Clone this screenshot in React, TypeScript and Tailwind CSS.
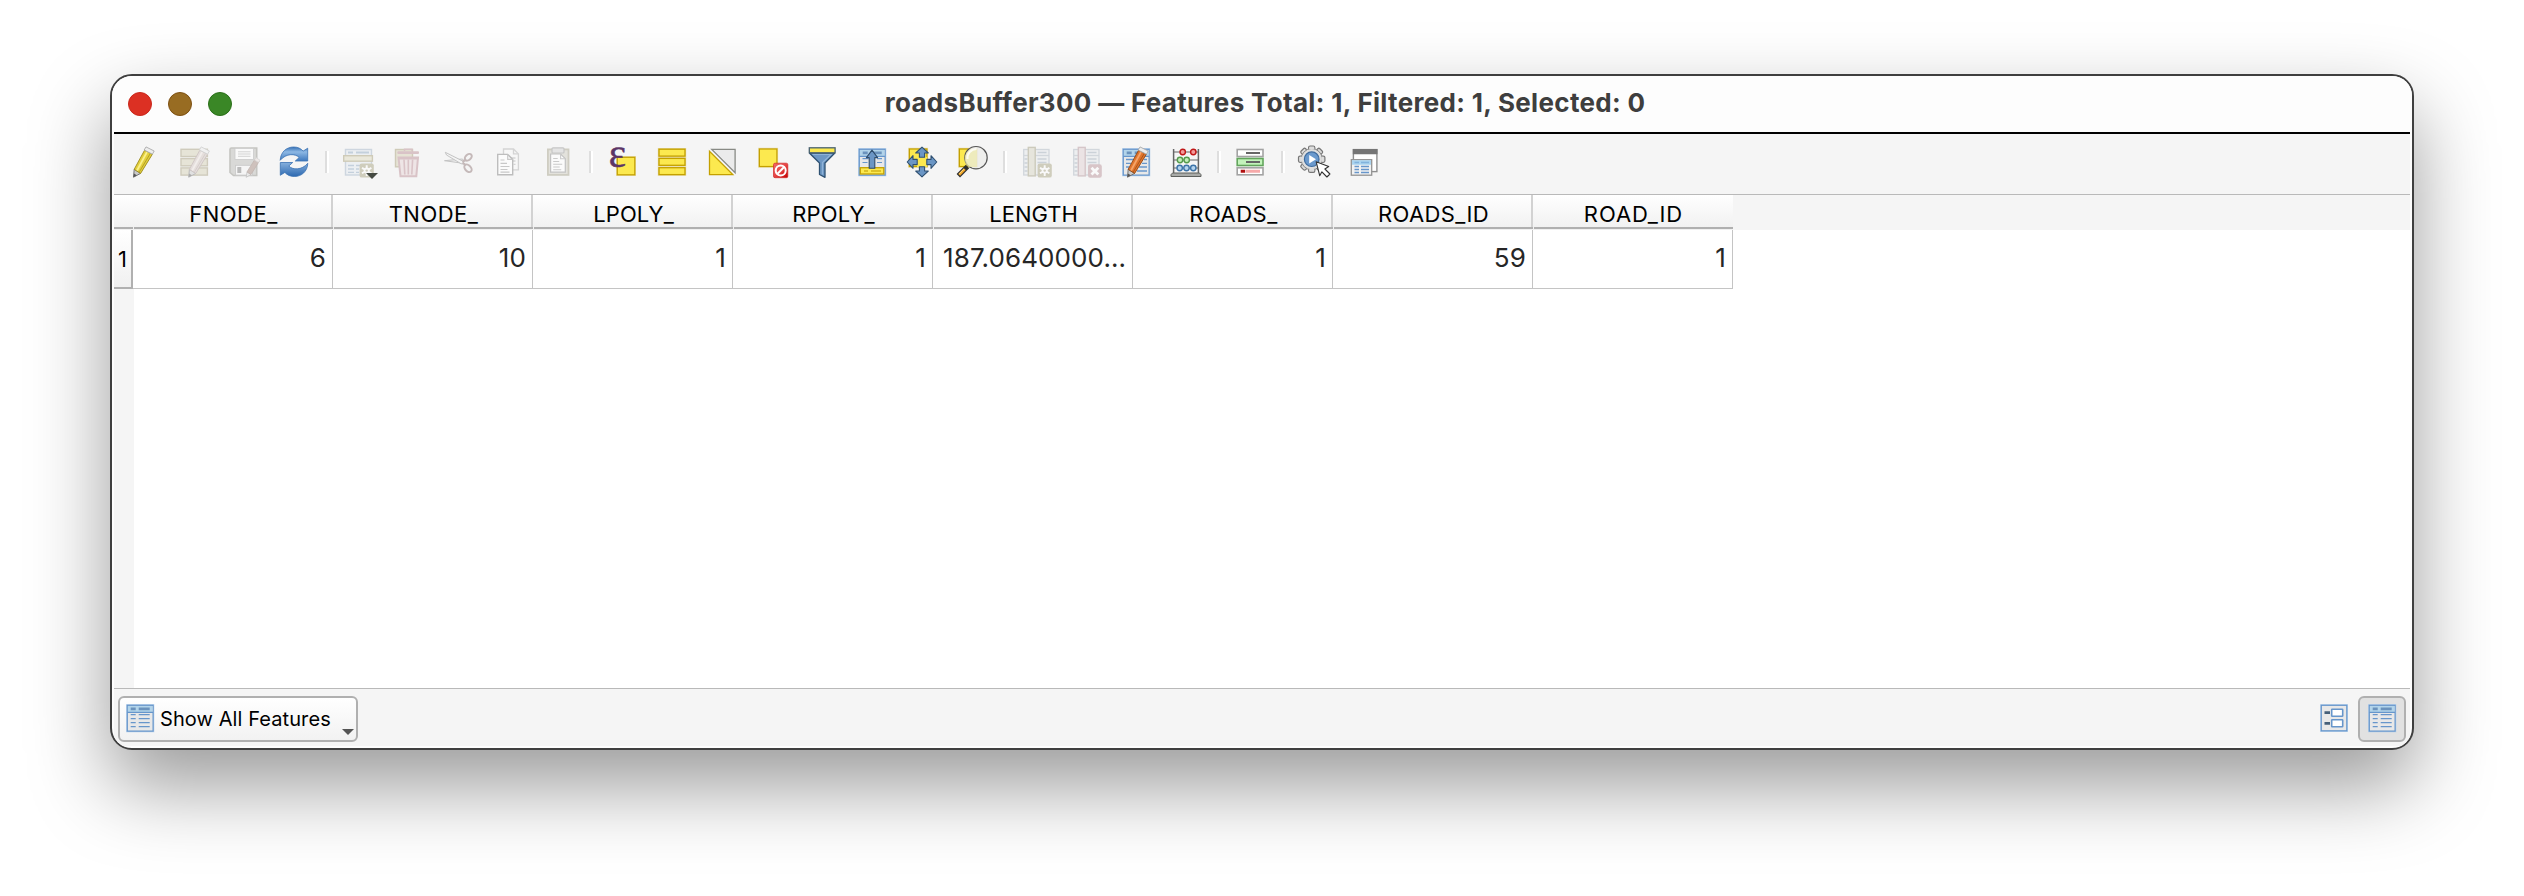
import React from 'react';
import type { ReactNode } from 'react';

function Icon({ children, faded = false }: { children: ReactNode; faded?: boolean }) {
  return (
    <svg
      viewBox="0 0 32 32"
      aria-hidden="true"
      className={faded ? 'size-8 shrink-0 overflow-visible opacity-45' : 'size-8 shrink-0 overflow-visible'}
    >
      {children}
    </svg>
  );
}

function Divider() {
  return <div className="-mr-[5px] -ml-[3px] h-[22px] w-1 shrink-0 border-r-2 border-l-2 border-r-white border-l-[#dedede]" />;
}

/* Pencil drawn from its tip (bottom left) to its cap (top right). */
function Pencil({ x = 0, body, light, dark }: { x?: number; body: string; light: string; dark: string }) {
  return (
    <g transform={`translate(${x} 0)`} strokeLinejoin="round">
      <path d="M5.5 31.2 6.2 23.3 12.6 27.4Z" fill="#c9c9c9" stroke="#6b6b6b" strokeWidth=".9" />
      <path d="M5.5 31.2 5.9 27.6 8.8 29.2Z" fill="#555" />
      <path d="M6.2 23.3 16.6 4.2 24.4 8.2 12.6 27.4Z" fill={body} stroke={dark} strokeWidth=".9" />
      <path d="M9 24.5 19 6" stroke={light} strokeWidth="1.8" />
      <path d="M11.4 25.8 22.3 7.5" stroke={dark} strokeWidth=".9" opacity=".75" />
      <path d="M16.2 4 18 .9 26.2 5 24.4 8.2Z" fill="#ededed" stroke="#aaa" strokeWidth=".9" />
    </g>
  );
}

function SmallPencil() {
  return (
    <g strokeLinejoin="round">
      <path d="m18.2 31.3.8-5.4 4 2.6Z" fill="#ddd" stroke="#888" strokeWidth=".8" />
      <path d="m19 25.9 8.2-13 4 2.4-8.2 13.2Z" fill="#a08478" stroke="#856a60" strokeWidth=".8" />
      <path d="m26.4 14 1.6-2.4 4 2.6-1.6 2.2Z" fill="#e8dcd8" stroke="#aaa" strokeWidth=".7" />
    </g>
  );
}

function ToggleEdit() {
  return <Icon><Pencil body="#e3cf3c" light="#faf08a" dark="#9c8a1c" /></Icon>;
}

function MultiEdit() {
  return (
    <Icon faded>
      {[3.3, 12.6, 21.9].map((y) => (
        <rect key={y} x="3" y={y} width="26.4" height="7.2" fill="#d6d0b4" stroke="#a29a78" strokeWidth="1.4" />
      ))}
      <Pencil x={5.2} body="#d2c4bf" light="#eee4e0" dark="#a08c88" />
    </Icon>
  );
}

function SaveEdits() {
  return (
    <Icon faded>
      <path d="M3.5 2h25.2v27.5H5.5L2 26.500V3.500Q2 2 3.500 2Z" fill="#b9b9b4" stroke="#8c8c84" strokeWidth="1.6" />
      <rect x="7" y="2.400" width="18.500" height="11" fill="#fff" stroke="#999" strokeWidth=".8" />
      <path d="M10 5.800h12.500M10 8h12.500M10 10.300h12.500" stroke="#aaa" strokeWidth="1" />
      <rect x="7.500" y="19.300" width="17" height="9.800" fill="#f7f7f7" stroke="#999" strokeWidth=".9" />
      <rect x="9.300" y="21" width="4" height="6" fill="#777" />
      <SmallPencil />
    </Icon>
  );
}

function Reload() {
  return (
    <Icon>
      <defs>
        <linearGradient id="reloadTop" x1="0" y1="0" x2="0" y2="1">
          <stop offset="0" stopColor="#3670b5" />
          <stop offset=".35" stopColor="#8db8e4" />
          <stop offset="1" stopColor="#3e78bd" />
        </linearGradient>
        <linearGradient id="reloadBottom" x1="0" y1="0" x2="0" y2="1">
          <stop offset="0" stopColor="#86b0dd" />
          <stop offset="1" stopColor="#2c68b0" />
        </linearGradient>
      </defs>
      <path d="M2.200 14.300C2.600 6 8.500 1 15.600 1c4.100 0 7.300 1.500 9.500 4.100l4.600-2.900v12.800H17.300l3.900-3.500C17.500 7.400 8 7.200 2.200 14.300Z" fill="url(#reloadTop)" stroke="#3a71b3" strokeWidth=".8" />
      <path d="M29.800 17.300C29.400 25.500 23.500 30.500 16.400 30.500c-4.100 0-7.300-1.500-9.500-4.100l-4.600 2.900V16.500h12.400l-3.900 3.500c3.700 4.100 13.200 4.300 19-2.700Z" fill="url(#reloadBottom)" stroke="#3a71b3" strokeWidth=".8" />
    </Icon>
  );
}

function StarBadge() {
  return (
    <>
      <rect x="17.600" y="17.400" width="14.200" height="14.200" rx="2.200" fill="#a39d79" />
      <path d="M24.700 19.200v10.800M20 21.900l9.400 5.400M29.400 21.900 20 27.300" stroke="#fff" strokeWidth="1.900" />
      <circle cx="24.700" cy="24.600" r="3" fill="#fff" />
      <circle cx="24.700" cy="24.600" r="1.200" fill="#a39d79" />
    </>
  );
}

function AddFeature() {
  return (
    <div className="relative size-8 shrink-0">
      <Icon faded>
        <rect x="3.500" y="3.500" width="26" height="25.500" fill="#e2e9f0" stroke="#9fb2c6" strokeWidth="1.400" />
        <path d="M6 6.500h5M14 6.500h13" stroke="#8ba5c0" strokeWidth="2" />
        <path d="M6 19.500h6M14 19.500h5M6 23h6M14 23h3M6 26.300h6M14 26.300h3" stroke="#8ba5c0" strokeWidth="1.300" />
        <rect x="1.700" y="9.700" width="28.700" height="5.500" fill="#dedabc" stroke="#a29a70" strokeWidth="1.400" />
        <StarBadge />
      </Icon>
      <svg viewBox="0 0 12 6" className="absolute top-[27px] left-6 h-1.5 w-3" aria-hidden="true">
        <path d="M0 0h12L6 6Z" fill="#454a42" />
      </svg>
    </div>
  );
}

function DeleteFeature() {
  return (
    <Icon faded>
      <rect x="3.500" y="3.500" width="17" height="17.300" fill="#d4ceb0" stroke="#a29a70" strokeWidth="1.400" />
      <rect x="5.300" y="5.200" width="21.700" height="2.900" rx="1" fill="#b98890" />
      <path d="M12.500 5V3.300h7.500V5" fill="none" stroke="#b98890" strokeWidth="1.400" />
      <path d="M6.500 11.500h19.500l-1.700 18.700H8.500Z" fill="#e6d2d4" stroke="#b98890" strokeWidth="2" />
      <path d="M12 13.500l.8 15M16.300 13.500v15M20.600 13.500l-.8 15" stroke="#b98890" strokeWidth="1.600" />
      <path d="M6.200 12.300h20" stroke="#b98890" strokeWidth="2.400" />
    </Icon>
  );
}

function Cut() {
  return (
    <Icon faded>
      <path d="M2.500 14.700 20.500 13l1.800 2.700L19 17Z" fill="#eee" stroke="#888" strokeWidth="1" />
      <path d="M3.300 6.300 20.600 15l1.700 3.200L19 17.700 4.500 9Z" fill="#f4f4f4" stroke="#888" strokeWidth="1" />
      <ellipse cx="26.300" cy="11.300" rx="4" ry="2.700" transform="rotate(-42 26.300 11.300)" fill="none" stroke="#8c7272" strokeWidth="2" />
      <ellipse cx="26" cy="22.300" rx="4.400" ry="2.900" transform="rotate(48 26 22.300)" fill="none" stroke="#8c7272" strokeWidth="2" />
      <path d="M20.500 15.500l3-1.500M20.500 16.500l3 2.500" stroke="#8c7272" strokeWidth="2" />
    </Icon>
  );
}

function Copy() {
  return (
    <Icon>
      <g opacity=".2">
        <path d="M11.500 3h10l4.900 4.900v16H11.500Z" fill="#fff" stroke="#555" strokeWidth="1.300" />
        <path d="M21.500 3v4.900h4.900M17 12h6.500M17 15h6.500M21.500 18.300h2" fill="none" stroke="#555" strokeWidth="1.300" />
      </g>
      <path d="M5.700 8.400h10l5 5v15.300h-15Z" fill="#fbfbfb" stroke="#bdbdbd" strokeWidth="1.400" />
      <path d="M15.700 8.400v5h5M8.500 14h4M8.500 17.300h6.500M8.500 20.500h9M8.500 23.500h7M8.500 26.200h9" fill="none" stroke="#c8c8c8" strokeWidth="1.200" />
    </Icon>
  );
}

function Paste() {
  return (
    <Icon>
      <rect x="5.900" y="3.400" width="20.600" height="25.500" fill="#e3e2dc" stroke="#cfcdc2" strokeWidth="1.800" />
      <path d="M8.600 8h10l4.700 4.700v13.500H8.600Z" fill="#fbfbfb" stroke="#c2c2c2" strokeWidth="1.200" />
      <path d="M18.600 8v4.700h4.700M11.200 12.500h4.500M11.200 15.500h6M11.200 18.300h9M11.200 21h6.500M11.200 23.700h8" fill="none" stroke="#cacaca" strokeWidth="1.100" />
      <rect x="10" y="1.800" width="12" height="5.200" rx="1" fill="#e4e4e4" stroke="#c6c6c6" strokeWidth="1.200" />
    </Icon>
  );
}

function YellowSquare({ x = 3.400, y = 3, size = 17.500 }: { x?: number; y?: number; size?: number }) {
  return (
    <>
      <rect x={x} y={y} width={size} height={size} fill="none" stroke="#e6d9a0" strokeWidth="2.400" />
      <rect x={x} y={y} width={size} height={size} fill="#fce94f" stroke="#c4a000" strokeWidth="1.200" />
    </>
  );
}

function SelectByExpression() {
  return (
    <Icon>
      <YellowSquare x={11.300} y={11.300} />
      <text x="2.800" y="20.800" fontFamily="'Liberation Serif', serif" fontSize="41" fill="#5c3566" stroke="#5c3566" strokeWidth=".5">ε</text>
    </Icon>
  );
}

function SelectAll() {
  return (
    <Icon>
      {[3.200, 12.400, 21.700].map((y) => (
        <g key={y}>
          <rect x="3" y={y} width="26" height="6.900" fill="none" stroke="#e6d9a0" strokeWidth="2.400" />
          <rect x="3" y={y} width="26" height="6.900" fill="#fce94f" stroke="#c4a000" strokeWidth="1.300" />
        </g>
      ))}
    </Icon>
  );
}

function InvertSelection() {
  return (
    <Icon>
      <path d="M5.800 3.400h23.300v23.300Z" fill="#ebebeb" stroke="#888a85" strokeWidth="1.300" />
      <path d="M3.500 5.300v23.300h23.300Z" fill="#fce94f" stroke="#c4a000" strokeWidth="1.300" />
    </Icon>
  );
}

function Deselect() {
  return (
    <Icon>
      <defs>
        <linearGradient id="deselectRed" x1="0" y1="0" x2="1" y2="1">
          <stop offset="0" stopColor="#ef6a6a" />
          <stop offset=".5" stopColor="#e64545" />
          <stop offset="1" stopColor="#c00000" />
        </linearGradient>
      </defs>
      <YellowSquare />
      <rect x="17.500" y="17.200" width="14.300" height="14.500" rx="1.500" fill="url(#deselectRed)" stroke="#d22626" strokeWidth=".7" />
      <circle cx="24.700" cy="24.500" r="5" fill="none" stroke="#fff" strokeWidth="2" />
      <path d="m21.500 27.700 6.400-6.400" stroke="#fff" strokeWidth="2" />
    </Icon>
  );
}

function Filter() {
  return (
    <Icon>
      <path d="M3.600 7.200h25L19 17v14.300l-5.500-2.800V17Z" fill="#6d97c4" stroke="#2e5172" strokeWidth="1.300" strokeLinejoin="round" />
      <path d="M6.500 8.500h18.500l-8.500 8v12" fill="none" stroke="#8fb3d8" strokeWidth="1.100" />
      <rect x="3.300" y="1.800" width="25.800" height="5" fill="#fce94f" stroke="#48606f" strokeWidth="1.300" />
    </Icon>
  );
}

function TableSheet() {
  return (
    <>
      <rect x="3.300" y="3.300" width="25.800" height="25.800" fill="none" stroke="#b4cfeb" strokeWidth="2.300" />
      <rect x="3.300" y="3.300" width="25.800" height="25.800" fill="#e8e8e8" stroke="#6796cb" strokeWidth="1.200" />
      <path d="M3.900 3.900h24.600v6.400H3.900Z" fill="#b2d4ea" />
      <path d="M3.300 10.300h25.800" stroke="#6796cb" strokeWidth="1.200" />
      <path d="M6.700 6.900h5M14.700 6.900h11" stroke="#6b93bd" strokeWidth="2.800" />
    </>
  );
}

function Table() {
  return (
    <Icon>
      <TableSheet />
      <path d="M6.700 12.700h5M14.700 12.700h11M6.700 16.700h5M14.700 16.700h11M6.700 20.700h5M14.700 20.700h11M6.700 24.700h5M14.700 24.700h11" stroke="#6796cb" strokeWidth="1.300" />
    </Icon>
  );
}

function MoveToTop() {
  return (
    <Icon>
      <TableSheet />
      <path d="M6.500 12.700h6M21 12.700h5M6.500 16.500h5M21 16.500h5" stroke="#6796cb" strokeWidth="1.200" />
      <rect x="4.300" y="21.700" width="23.500" height="6.300" fill="#fce94f" stroke="#c4a000" strokeWidth="1.300" />
      <path d="M8 25h4M15 25h10" stroke="#d2b41a" strokeWidth="1.300" />
      <path d="m16 4.200 5.600 7.400h-2.800v10.600h-5.600V11.600h-2.800Z" fill="#6b96c5" stroke="#2f4d6c" strokeWidth="1.100" strokeLinejoin="round" />
    </Icon>
  );
}

function PanToSelected() {
  return (
    <Icon>
      <YellowSquare />
      <rect x="11" y="11" width="10" height="10" fill="#fce94f" />
      {[0, 90, 180, 270].map((a) => (
        <path
          key={a}
          transform={`rotate(${a} 16 16)`}
          d="m16 1.200 6.300 5.800h-3.700v4.200h-5.200V7H9.700Z"
          fill="#6b96c5"
          stroke="#2f5072"
          strokeWidth="1.100"
          strokeLinejoin="round"
        />
      ))}
    </Icon>
  );
}

function ZoomToSelected() {
  return (
    <Icon>
      <YellowSquare />
      <path d="M11.500 20.500 2.300 29.700" stroke="#2e2e2e" strokeWidth="4.800" />
      <path d="M8.800 23.200 3.200 28.800" stroke="#f2a829" strokeWidth="2.600" />
      <path d="M8 22.900 3.200 27.700" stroke="#ffe08a" strokeWidth=".9" />
      <circle cx="20" cy="11.700" r="11.200" fill="#ededea" fillOpacity=".92" stroke="#555" strokeWidth="1.200" />
      <path d="M21 3v18H12.500a11 11 0 0 1-2-14.500Q14 2.500 21 3Z" fill="#eeeab0" opacity=".75" />
      <path d="M11.500 13a9 9 0 0 1 9-10" fill="none" stroke="#fff" strokeWidth="2" opacity=".8" />
    </Icon>
  );
}

function FieldSheet({ column, line }: { column: string; line: string }) {
  return (
    <>
      <rect x="3.700" y="3.500" width="25.300" height="25.500" fill="#e4e8ec" stroke="#a9b4bf" strokeWidth="1.300" />
      <path d="M3.700 9.500H29" stroke="#a9b4bf" strokeWidth="1.300" />
      <path d="M17.500 6.500h9M17.500 13h9M17.500 16.500h9M4.500 13h3M4.500 17h3M4.500 21h3M4.500 25h3" stroke="#9aa8b6" strokeWidth="1.300" />
      <rect x="8.300" y="1.400" width="6.900" height="28.500" fill={column} stroke={line} strokeWidth="1.400" />
    </>
  );
}

function NewField() {
  return (
    <Icon faded>
      <FieldSheet column="#d6d3be" line="#9c9778" />
      <StarBadge />
    </Icon>
  );
}

function DeleteField() {
  return (
    <Icon faded>
      <FieldSheet column="#e0cfd1" line="#b08f94" />
      <rect x="18" y="18.300" width="13.800" height="13.500" rx="2.200" fill="#b58c92" />
      <path d="m21.500 21.700 6.800 6.800M28.300 21.700l-6.800 6.800" stroke="#fff" strokeWidth="2.800" />
    </Icon>
  );
}

function EditTable() {
  return (
    <Icon>
      <TableSheet />
      <path d="M6 13.500h8M6 17.300h5M6 21h3M24 13.500h3M22 17.300h5M19 21h8M17 25h10" stroke="#6796cb" strokeWidth="1.300" />
      <Pencil x={2} body="#e0752c" light="#f6a468" dark="#8f4513" />
    </Icon>
  );
}

function Abacus() {
  const rows: [number, number[], string, string][] = [
    [6, [12.700, 23.300], '#f39a9a', '#c01818'],
    [14, [10, 16.700], '#c4eeb9', '#559a4c'],
    [22, [9.700, 16.500, 23.300], '#b5d4ee', '#3d74a8'],
  ];
  return (
    <Icon>
      <path d="M3.600 3v24M28.400 3v24" stroke="#666" strokeWidth="1.500" />
      <path d="M2.500 27h27l1.500 1.700v1.800H1v-1.800Z" fill="#a9aba8" stroke="#5e605d" strokeWidth="1" />
      {rows.map(([y, beads, fill, stroke]) => (
        <g key={y}>
          <path d={`M3.600 ${y}h24.800`} stroke="#666" strokeWidth="1.200" />
          {beads.map((x) => (
            <circle key={x} cx={x} cy={y} r="2.700" fill={fill} stroke={stroke} strokeWidth="1.400" />
          ))}
        </g>
      ))}
    </Icon>
  );
}

function ConditionalFormatting() {
  return (
    <Icon>
      <rect x="3.200" y="3.500" width="25.800" height="7" fill="#fff" stroke="#a3a3a3" strokeWidth="1.600" />
      <path d="M12 7h14" stroke="#666" strokeWidth="2.200" />
      <rect x="3.200" y="12.500" width="25.800" height="7" fill="#c3f3bb" stroke="#62a55c" strokeWidth="1.600" />
      <path d="M12 16h14" stroke="#666" strokeWidth="2.200" />
      <rect x="3.200" y="21.800" width="25.800" height="7" fill="#fff" stroke="#a3a3a3" strokeWidth="1.600" />
      <path d="M6.700 25.300h4.500" stroke="#b00f0f" strokeWidth="3" />
      <path d="M12 25.300h14" stroke="#f6a9a9" strokeWidth="3" />
    </Icon>
  );
}

function Actions() {
  return (
    <Icon>
      {[0, 45, 90, 135, 180, 225, 270, 315].map((a) => (
        <rect key={a} x="10.600" y="0" width="6.200" height="6" rx="1.500" transform={`rotate(${a} 13.700 13.200)`} fill="#dcdcdc" stroke="#777" strokeWidth="1.200" />
      ))}
      <circle cx="13.700" cy="13.200" r="10.600" fill="#dedede" stroke="#858585" strokeWidth="1" />
      <path d="M11.200 2.600h5M11.200 23.800h5M3.100 10.700v5M24.300 10.700v5" stroke="#dedede" strokeWidth="2" />
      <circle cx="13.700" cy="13.200" r="7.300" fill="#6a99cd" stroke="#3f6c9f" strokeWidth="1.200" />
      <path d="M11.200 9v8.400l6.800-4.200Z" fill="#fff" />
      <path d="m18.200 15.800 12.500 4.700-3.800 2.500 5 5-3 3-5-5.200-2.200 3.900Z" fill="#fff" stroke="#333" strokeWidth="1.100" strokeLinejoin="round" />
    </Icon>
  );
}

function Dock() {
  return (
    <Icon>
      <rect x="5.400" y="3.600" width="23.500" height="22" fill="#fff" stroke="#8f8f8f" strokeWidth="1.400" />
      <path d="M4.800 3h24.700v5.300H4.800Z" fill="#757575" />
      <rect x="3.300" y="13.700" width="20.400" height="15.500" fill="#f2f2f2" stroke="#929292" strokeWidth="1.300" />
      <path d="M4 14.300h19v4.500H4Z" fill="#a9d3ef" />
      <path d="M6.500 16.500h4.500M13 16.500h8" stroke="#82b2dc" strokeWidth="1.400" />
      <path d="M6.500 20.500h4.500M13 20.500h8M6.500 23.500h4.500M13 23.500h8M6.500 26.500h4.500M13 26.500h8" stroke="#6796cb" strokeWidth="1.300" />
    </Icon>
  );
}

function FormView() {
  return (
    <Icon>
      <rect x="3.300" y="3.300" width="25.500" height="25.500" fill="none" stroke="#b4cfeb" strokeWidth="2.300" />
      <rect x="3.300" y="3.300" width="25.500" height="25.500" fill="#e8e8e8" stroke="#6796cb" strokeWidth="1.200" />
      <path d="M6.500 10.700H12M6.500 21.300H12" stroke="#455f78" strokeWidth="2.800" />
      {[7.200, 17.700].map((y) => (
        <rect key={y} x="13.700" y={y} width="11" height="7" rx=".5" fill="#fff" stroke="#6796cb" strokeWidth="1.600" />
      ))}
    </Icon>
  );
}

type Column = { name: string; value: string; tracking: string };

const columns: Column[] = [
  { name: 'FNODE_', value: '6', tracking: 'tracking-[0.5px]' },
  { name: 'TNODE_', value: '10', tracking: 'tracking-[0.5px]' },
  { name: 'LPOLY_', value: '1', tracking: 'tracking-[0.1px]' },
  { name: 'RPOLY_', value: '1', tracking: 'tracking-[0.1px]' },
  { name: 'LENGTH', value: '187.0640000…', tracking: 'tracking-normal' },
  { name: 'ROADS_', value: '1', tracking: 'tracking-[0.5px]' },
  { name: 'ROADS_ID', value: '59', tracking: 'tracking-[0.4px]' },
  { name: 'ROAD_ID', value: '1', tracking: 'tracking-[0.9px]' },
];

function TitleBar() {
  return (
    <header className="flex h-14 shrink-0 items-center bg-[#fdfdfd] px-4">
      <div className="flex w-[200px] gap-4">
        <span className="size-6 rounded-full border border-[#c9281c] bg-[#dc3023]" />
        <span className="size-6 rounded-full border border-[#7d5012] bg-[#986c22]" />
        <span className="size-6 rounded-full border border-[#2a6f19] bg-[#3a8726]" />
      </div>
      <h1 className="flex-1 pb-[3px] pl-1.5 text-center text-[26px] leading-8 font-bold tracking-[0.32px] whitespace-nowrap text-[#3e3e3e]">
        roadsBuffer300 — Features Total: 1, Filtered: 1, Selected: 0
      </h1>
      <div className="w-[200px]" />
    </header>
  );
}

function Toolbar() {
  return (
    <div className="flex h-[61px] shrink-0 items-center gap-[18px] border-b border-[#b9b9b9] bg-[#f5f5f5] pb-1 pl-3.5">
      <ToggleEdit />
      <MultiEdit />
      <SaveEdits />
      <Reload />
      <Divider />
      <AddFeature />
      <DeleteFeature />
      <Cut />
      <Copy />
      <Paste />
      <Divider />
      <SelectByExpression />
      <SelectAll />
      <InvertSelection />
      <Deselect />
      <Filter />
      <MoveToTop />
      <PanToSelected />
      <ZoomToSelected />
      <Divider />
      <NewField />
      <DeleteField />
      <EditTable />
      <Abacus />
      <Divider />
      <ConditionalFormatting />
      <Divider />
      <Actions />
      <Dock />
    </div>
  );
}

function AttributeTable() {
  return (
    <main className="flex flex-1 flex-col bg-white">
      <div className="flex h-[35px] bg-[#f5f5f5]">
        <div className="flex w-[19px] flex-col bg-linear-to-b from-white to-[#f0f0f0] pt-8">
          <div className="h-0.5 bg-[#b0b0b0]" />
        </div>
        {columns.map((c, i) => (
          <div key={c.name} className="flex w-[200px] flex-col bg-linear-to-b from-white to-[#f0f0f0]">
            <div className={`flex h-8 items-center justify-center border-r-2 pt-[5px] pl-[3px] text-[22px] leading-[26px] text-black ${c.tracking} ${i === columns.length - 1 ? 'border-transparent' : 'border-[#d2d2d2]'}`}>
              {c.name}
            </div>
            <div className="ml-px h-0.5 bg-[#b0b0b0]" />
          </div>
        ))}
      </div>
      <div className="flex flex-1 items-start">
        <div className="flex h-full w-5 flex-col bg-[#f5f5f5]">
          <div className="flex h-[59px] w-[19px] items-center justify-center border-r-2 border-b-2 border-[#b0b0b0] bg-linear-to-b from-white to-[#f0f0f0] pt-0.5 text-[22px] text-black">
            1
          </div>
        </div>
        <div className="-ml-px flex h-[59px]">
          {columns.map((c) => (
            <div key={c.name} className="flex w-[200px] items-center justify-end border-r border-b border-[#c4c4c4] bg-white pr-1.5 pb-[3px] text-[26px] tracking-[0.1px] text-[#262626]">
              {c.value}
            </div>
          ))}
        </div>
      </div>
    </main>
  );
}

function Footer() {
  return (
    <footer className="flex h-[58px] shrink-0 items-center justify-between border-t border-[#b9b9b9] bg-[#f5f5f5] px-1 pt-[3px]">
      <button className="flex h-[46px] w-60 items-center rounded-md border-2 border-[#b0b0b0] bg-linear-to-b from-white to-[#f2f2f2] pl-1 text-xl text-black">
        <span className="flex pb-0.5"><Table /></span>
        <span className="ml-1 flex-1 text-left tracking-[0.09px] whitespace-nowrap">Show All Features</span>
        <svg viewBox="0 0 12 6" className="mt-[26px] mr-0.5 h-1.5 w-3" aria-hidden="true">
          <path d="M0 0h12L6 6Z" fill="#555" />
        </svg>
      </button>
      <div className="flex items-center gap-2">
        <button className="flex pb-0.5"><FormView /></button>
        <button className="flex h-[46px] w-12 items-center justify-center rounded-md border-2 border-[#b0b0b0] bg-[#e1e1e1] pb-0.5">
          <Table />
        </button>
      </div>
    </footer>
  );
}

export default function App() {
  return (
    <div className="h-[896px] w-[2524px] overflow-hidden bg-white pt-[74px] pl-[110px] font-['Inter','Liberation_Sans',sans-serif]">
      <div className="flex h-[676px] w-[2304px] flex-col overflow-hidden rounded-[22px] border-2 border-[#3f3f3f] bg-[#fdfdfd] shadow-[0_36px_80px_rgba(0,0,0,0.4)]">
        <TitleBar />
        <div className="flex flex-1 flex-col px-0.5 pb-0.5">
          <div className="h-0.5 shrink-0 bg-black" />
          <Toolbar />
          <AttributeTable />
          <Footer />
        </div>
      </div>
    </div>
  );
}
